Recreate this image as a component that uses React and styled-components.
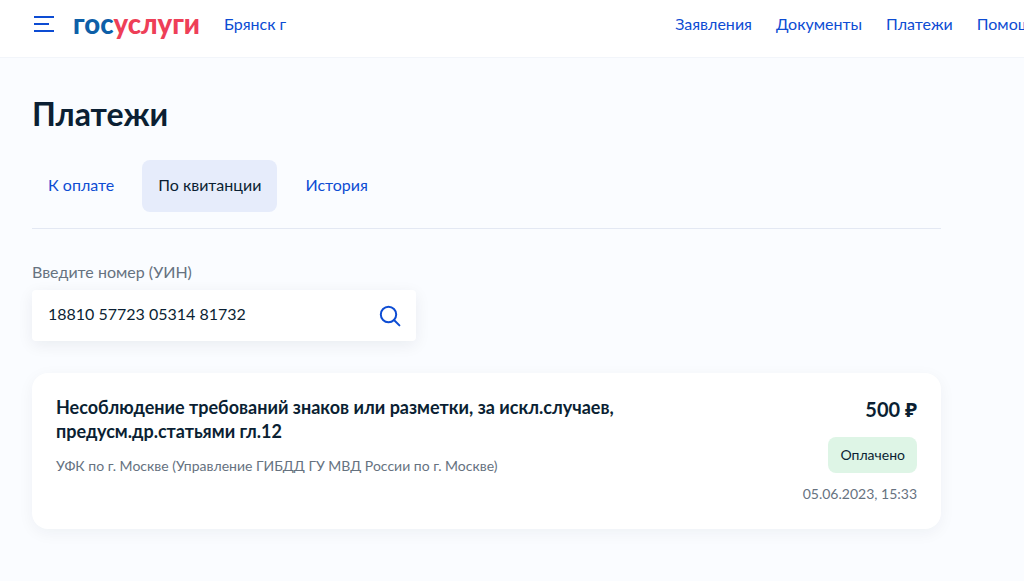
import React from "react";
import styled, { createGlobalStyle } from "styled-components";

const GlobalStyle = createGlobalStyle`
  html, body {
    margin: 0;
    height: 100%;
    overflow: hidden;
    background: #fafcff;
    font-family: "Lato", "Noto Sans", sans-serif;
    color: #0b1f33;
  }
`;

const NAV_ITEMS = ["Заявления", "Документы", "Платежи", "Помощь"];
const TABS = [
  { label: "К оплате" },
  { label: "По квитанции", active: true },
  { label: "История" },
];

const App = () => {
  return (
    <Page>
      <GlobalStyle />
      <Header>
        <Burger aria-hidden="true" viewBox="0 0 20 16" width="20" height="16">
          <rect x="0" y="0" width="20" height="2" fill="#0d4cd3" />
          <rect x="0" y="7" width="15" height="2" fill="#0d4cd3" />
          <rect x="0" y="14" width="20" height="2" fill="#0d4cd3" />
        </Burger>
        <Logo>
          <LogoPart>гос</LogoPart>
          <LogoPart $red>услуги</LogoPart>
        </Logo>
        <City>Брянск г</City>
        <Nav>
          {NAV_ITEMS.map((item) => (
            <NavLink key={item}>{item}</NavLink>
          ))}
        </Nav>
      </Header>
      <Main>
        <Title>Платежи</Title>
        <Tabs>
          {TABS.map((tab) => (
            <Tab key={tab.label} $active={tab.active}>
              {tab.label}
            </Tab>
          ))}
        </Tabs>
        <Label>Введите номер (УИН)</Label>
        <SearchBox>
          <SearchValue>18810 57723 05314 81732</SearchValue>
          <svg width="22" height="22" viewBox="0 0 22 22" fill="none" aria-hidden="true">
            <circle cx="9.5" cy="9.5" r="7.7" stroke="#0d4cd3" strokeWidth="2" />
            <path d="M15 15l5.4 5.4" stroke="#0d4cd3" strokeWidth="2" strokeLinecap="round" />
          </svg>
        </SearchBox>
        <Card>
          <CardInfo>
            <CardTitle>
              Несоблюдение требований знаков или разметки, за искл.случаев,
              предусм.др.статьями гл.12
            </CardTitle>
            <CardOrg>УФК по г. Москве (Управление ГИБДД ГУ МВД России по г. Москве)</CardOrg>
          </CardInfo>
          <CardSide>
            <Amount>500 ₽</Amount>
            <Status>Оплачено</Status>
            <DateText>05.06.2023, 15:33</DateText>
          </CardSide>
        </Card>
      </Main>
    </Page>
  );
};

const Page = styled.div`
  width: 1024px;
  height: 581px;
  overflow: hidden;
`;

const Header = styled.header`
  display: flex;
  align-items: center;
  box-sizing: border-box;
  height: 58px;
  padding: 0 0 10px 34px;
  background: #fff;
  border-bottom: 1px solid #f2f5fa;
  white-space: nowrap;
`;

const Burger = styled.svg`
  flex: none;
  margin-right: 19px;
`;

const Logo = styled.div`
  display: flex;
  flex: none;
  width: 127px;
  margin-right: 24px;
  font-family: "Lato", sans-serif;
  font-size: 27.5px;
  font-weight: 900;
  line-height: 1;
`;

const LogoPart = styled.span`
  color: ${(props) => (props.$red ? "#ee3f58" : "#0d5fa8")};
`;

const City = styled.a`
  flex: none;
  font-size: 16px;
  color: #0d4cd3;
`;

const Nav = styled.nav`
  display: flex;
  flex: none;
  gap: 24px;
  margin-left: 389px;
`;

const NavLink = styled.a`
  font-size: 16px;
  color: #0d4cd3;
`;

const Main = styled.main`
  width: 909px;
  margin-left: 32px;
`;

const Title = styled.h1`
  margin: 0;
  padding-top: 37px;
  font-size: 32px;
  line-height: 38px;
  font-weight: 700;
  color: #0b1f33;
`;

const Tabs = styled.div`
  display: flex;
  gap: 12px;
  margin-top: 27px;
  padding-bottom: 16px;
  border-bottom: 1px solid #e3e8f3;
`;

const Tab = styled.a`
  display: flex;
  align-items: center;
  box-sizing: border-box;
  height: 52px;
  padding: 0 16px 3px;
  border-radius: 8px;
  font-size: 16px;
  background: ${(props) => (props.$active ? "#e6ecfb" : "transparent")};
  color: ${(props) => (props.$active ? "#0b1f33" : "#0d4cd3")};
`;

const Label = styled.div`
  margin-top: 33px;
  font-size: 16px;
  line-height: 20px;
  color: #66727f;
`;

const SearchBox = styled.div`
  display: flex;
  align-items: center;
  justify-content: space-between;
  box-sizing: border-box;
  width: 384px;
  height: 51px;
  margin-top: 8px;
  padding: 0 15px 0 16px;
  background: #fff;
  border-radius: 4px;
  box-shadow: 0 4px 16px rgba(11, 31, 51, 0.07);
`;

const SearchValue = styled.span`
  margin-bottom: 5px;
  font-size: 16px;
  color: #0b1f33;
`;

const Card = styled.section`
  display: flex;
  justify-content: space-between;
  box-sizing: border-box;
  height: 156px;
  margin-top: 32px;
  padding: 22px 24px 24px;
  background: #fff;
  border-radius: 16px;
  box-shadow: 0 4px 16px rgba(11, 31, 51, 0.05);
`;

const CardInfo = styled.div`
  width: 580px;
`;

const CardTitle = styled.div`
  font-size: 18px;
  line-height: 24px;
  font-weight: 700;
  color: #0b1f33;
`;

const CardOrg = styled.div`
  margin-top: 13px;
  font-size: 14px;
  line-height: 20px;
  color: #66727f;
`;

const CardSide = styled.div`
  display: flex;
  flex-direction: column;
  align-items: flex-end;
`;

const Amount = styled.div`
  margin-top: 1px;
  font-size: 20px;
  line-height: 26px;
  font-weight: 700;
  color: #0b1f33;
`;

const Status = styled.div`
  display: flex;
  align-items: center;
  box-sizing: border-box;
  height: 36px;
  margin-top: 15px;
  padding: 0 12px 2px;
  border-radius: 8px;
  font-size: 14px;
  background: #def5e6;
  color: #0b1f33;
`;

const DateText = styled.div`
  margin-top: 11px;
  font-size: 14px;
  line-height: 20px;
  color: #66727f;
`;

export default App;
